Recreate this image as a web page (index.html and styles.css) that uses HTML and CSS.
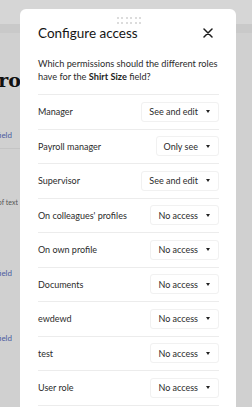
FILE: index.html
```html
<!DOCTYPE html>
<html>
<head>
  <meta charset="utf-8">
  <title>Configure access</title>
  <link rel="stylesheet" href="styles.css">
</head>
<body>
  <div class="page">
    <div class="topbar"></div>
    <div class="subbar"></div>
    <div class="side">
      <div class="heading">Profile</div>
      <div class="clip link"><span>Add field</span></div>
      <div class="rule"></div>
      <div class="clip note"><span>A lot of text</span></div>
      <div class="clip link second"><span>Add field</span></div>
      <div class="clip link third"><span>Add field</span></div>
    </div>
  </div>

  <div class="modal">
    <div class="handle">
      <i></i><i></i><i></i><i></i><i></i><i></i>
      <i></i><i></i><i></i><i></i><i></i><i></i>
    </div>
    <div class="modal-head">
      <h2>Configure access</h2>
      <button class="close" aria-label="Close">
        <svg width="10" height="10" viewBox="0 0 10 10">
          <path d="M1 1L9 9M9 1L1 9" stroke="#1d1d1d" stroke-width="1.5" stroke-linecap="round"/>
        </svg>
      </button>
    </div>
    <p class="intro">Which permissions should the different roles have for the <b>Shirt Size</b> field?</p>

    <div class="roles">
      <div class="role"><span>Manager</span><div class="select">See and edit<em class="caret"></em></div></div>
      <div class="role"><span>Payroll manager</span><div class="select">Only see<em class="caret"></em></div></div>
      <div class="role"><span>Supervisor</span><div class="select">See and edit<em class="caret"></em></div></div>
      <div class="role"><span>On colleagues' profiles</span><div class="select">No access<em class="caret"></em></div></div>
      <div class="role"><span>On own profile</span><div class="select">No access<em class="caret"></em></div></div>
      <div class="role"><span>Documents</span><div class="select">No access<em class="caret"></em></div></div>
      <div class="role"><span>ewdewd</span><div class="select">No access<em class="caret"></em></div></div>
      <div class="role"><span>test</span><div class="select">No access<em class="caret"></em></div></div>
      <div class="role"><span>User role</span><div class="select">No access<em class="caret"></em></div></div>
    </div>
  </div>
</body>
</html>
```

FILE: styles.css
```css
html, body {
  margin: 0;
  height: 100%;
  overflow: hidden;
}
body {
  background: #d0d0d0;
  font-family: Lato, "Open Sans", sans-serif;
}

.page .topbar {
  height: 24px;
  background: #d6d6d6;
}
.page .subbar {
  height: 9px;
  background: #c9c9c9;
}

.side {
  width: 20px;
}
.clip {
  display: flex;
  justify-content: flex-end;
  overflow: hidden;
  white-space: nowrap;
}
.heading {
  margin: 36px 0 0 -16px;
  height: 22px;
  line-height: 22px;
  white-space: nowrap;
  font-family: "DejaVu Serif", serif;
  font-weight: bold;
  font-size: 19px;
  color: #111;
}
.link {
  width: 12px;
  margin-top: 38px;
  height: 12px;
  line-height: 12px;
  font-size: 8px;
  color: #4a5ba0;
}
.link.second {
  margin-top: 59px;
}
.link.third {
  margin-top: 53px;
}
.rule {
  width: 20px;
  height: 1px;
  margin-top: 7px;
  background: #c4c4c4;
}
.note {
  width: 18px;
  margin-top: 47px;
  height: 12px;
  line-height: 12px;
  font-size: 7px;
  color: #555;
}

/* modal sits over the page */
.modal {
  position: absolute;
  top: 9px;
  left: 20px;
  width: 216px;
  box-sizing: border-box;
  padding: 8px 17px 20px 18px;
  background: #fff;
  border-radius: 6px;
  color: #222;
}

.handle {
  display: grid;
  grid-template-columns: repeat(6, 2px);
  gap: 3px 2.6px;
  justify-content: center;
  margin-left: 1px;
}
.handle i {
  width: 2px;
  height: 2px;
  background: #dcdcdc;
}

.modal-head {
  display: flex;
  align-items: center;
  justify-content: space-between;
  margin-top: -1px;
  height: 20px;
}
.modal-head h2 {
  margin: 0;
  font-size: 13.5px;
  font-weight: normal;
  color: #141414;
}
.close {
  border: 0;
  padding: 0;
  background: none;
  margin-right: 6px;
  display: flex;
}

.intro {
  margin: 14px 0 0;
  font-size: 9.2px;
  line-height: 13px;
  color: #2b2b2b;
  padding-bottom: 11px;
  border-bottom: 1px solid #ececec;
}
.intro b {
  color: #1d1d1d;
}

.role {
  display: flex;
  align-items: center;
  justify-content: space-between;
  padding: 6.75px 0;
  border-bottom: 1px solid #ececec;
  font-size: 9px;
  color: #2b2b2b;
}
.select {
  display: flex;
  align-items: center;
  height: 20px;
  box-sizing: border-box;
  padding: 0 8px 0 7px;
  border: 1px solid #f1f1f1;
  border-radius: 3px;
  color: #2b2b2b;
}
.caret {
  width: 0;
  height: 0;
  margin-left: 8px;
  border-left: 2.5px solid transparent;
  border-right: 2.5px solid transparent;
  border-top: 3px solid #222;
}
```
